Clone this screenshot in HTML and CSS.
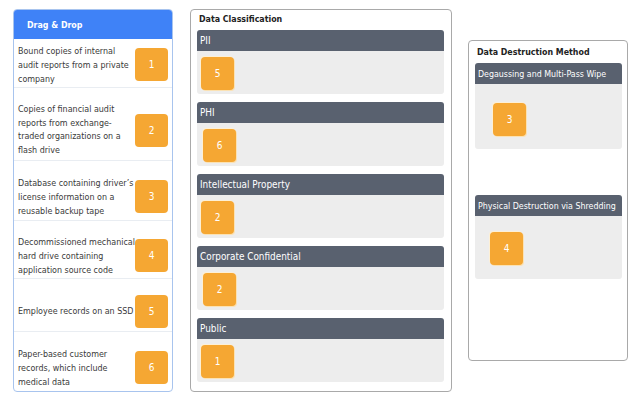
FILE: index.html
```html
<!DOCTYPE html>
<html>
<head>
<meta charset="utf-8">
<link rel="stylesheet" href="styles.css">
</head>
<body>
<div class="page">
  <div class="source">
    <div class="source-head">Drag &amp; Drop</div>
    <div class="item"><div class="item-text">Bound copies of internal<br>audit reports from a private<br>company</div><div class="badge">1</div></div>
    <div class="item"><div class="item-text">Copies of financial audit<br>reports from exchange-<br>traded organizations on a<br>flash drive</div><div class="badge">2</div></div>
    <div class="item"><div class="item-text">Database containing driver’s<br>license information on a<br>reusable backup tape</div><div class="badge">3</div></div>
    <div class="item"><div class="item-text">Decommissioned mechanical<br>hard drive containing<br>application source code</div><div class="badge">4</div></div>
    <div class="item"><div class="item-text">Employee records on an SSD</div><div class="badge">5</div></div>
    <div class="item"><div class="item-text">Paper-based customer<br>records, which include<br>medical data</div><div class="badge">6</div></div>
  </div>

  <div class="panel classify">
    <div class="panel-title">Data Classification</div>
    <div class="zone"><div class="zone-head">PII</div><div class="zone-body"><div class="badge placed">5</div></div></div>
    <div class="zone"><div class="zone-head">PHI</div><div class="zone-body"><div class="badge placed">6</div></div></div>
    <div class="zone"><div class="zone-head">Intellectual Property</div><div class="zone-body"><div class="badge placed">2</div></div></div>
    <div class="zone"><div class="zone-head">Corporate Confidential</div><div class="zone-body"><div class="badge placed">2</div></div></div>
    <div class="zone"><div class="zone-head">Public</div><div class="zone-body"><div class="badge placed">1</div></div></div>
  </div>

  <div class="panel destroy">
    <div class="panel-title">Data Destruction Method</div>
    <div class="dzone first"><div class="zone-head small">Degaussing and Multi-Pass Wipe</div><div class="dzone-body"><div class="badge placed">3</div></div></div>
    <div class="dzone second"><div class="zone-head small">Physical Destruction via Shredding</div><div class="dzone-body"><div class="badge placed">4</div></div></div>
  </div>
</div>
</body>
</html>
```

FILE: styles.css
```css
* { box-sizing: border-box; }
html, body { margin: 0; padding: 0; background: #ffffff; }
body {
  width: 640px;
  height: 406px;
  overflow: hidden;
  font-family: "DejaVu Sans Condensed", "DejaVu Sans", sans-serif;
  font-size: 8.9px;
  color: #333333;
}
.page {
  display: flex;
  align-items: flex-start;
  padding: 9px 0 0 13px;
}

/* source list */
.source {
  width: 160px;
  height: 383px;
  border: 1px solid #a8c4ee;
  border-radius: 4px;
  overflow: hidden;
  display: flex;
  flex-direction: column;
  background: #fff;
}
.source-head {
  height: 29px;
  background: #3f82f7;
  color: #fff;
  font-weight: bold;
  font-size: 8.8px;
  display: flex;
  align-items: center;
  padding-left: 13px;
  flex: none;
}
.item {
  display: flex;
  align-items: center;
  padding: 12px 4px 0 4px;
  border-bottom: 1px solid #e9edf2;
  flex: none;
}
.item:nth-child(2) { height: 49px; padding-top: 3px; }
.item:nth-child(3) { height: 73px; }
.item:nth-child(4) { height: 60px; }
.item:nth-child(5) { height: 58px; }
.item:nth-child(6) { height: 53px; }
.item:nth-child(7) { height: 60px; padding-top: 11px; border-bottom: none; }
.item-text {
  width: 117px;
  flex: none;
  white-space: nowrap;
  line-height: 14px;
  color: #3a3a3a;
}
.item:nth-child(3) .item-text { line-height: 13.5px; }
.item .badge { margin-left: auto; }
.badge {
  width: 33px;
  height: 33px;
  flex: none;
  background: #f5a733;
  border-radius: 4px;
  color: #fff;
  font-size: 10px;
  display: flex;
  align-items: center;
  justify-content: center;
}
.badge.placed {
  box-shadow: 1px 1px 0 #fbe2b4, -1px -1px 0 #fdf0d6;
}

/* panels */
.panel {
  border: 1px solid #a9a9a9;
  border-radius: 4px;
  background: #fff;
}
.panel-title {
  font-weight: bold;
  font-size: 8.8px;
  color: #222;
  height: 14px;
  line-height: 14px;
  padding-left: 2px;
}
.classify {
  width: 262px;
  height: 383px;
  margin-left: 17px;
  padding: 2px 7px 0 6px;
}
.zone { margin-top: 4px; }
.zone + .zone { margin-top: 8px; }
.zone-head {
  height: 21px;
  background: #59616f;
  color: #fff;
  font-size: 9.9px;
  display: flex;
  align-items: center;
  padding-left: 3px;
  border-radius: 3px 3px 0 0;
}
.zone-head.small { font-size: 8.8px; padding-left: 3px; }
.zone-body {
  height: 43px;
  background: #ededed;
  border-radius: 0 0 3px 3px;
  padding: 6px 0 0 4px;
}
.zone:nth-child(3) .zone-body { padding-left: 6px; }
.zone:nth-child(5) .zone-body { padding-left: 6px; }

.destroy {
  width: 160px;
  height: 321px;
  margin-left: 16px;
  margin-top: 31px;
  padding: 4px 5px 0 6px;
}
.dzone.first { margin-top: 4px; }
.dzone.second { margin-top: 46px; }
.dzone-body {
  height: 65px;
  background: #ededed;
  border-radius: 0 0 3px 3px;
}
.first .dzone-body { padding: 19px 0 0 18px; }
.second .dzone-body { padding: 16px 0 0 15px; height: 63px; }
```
